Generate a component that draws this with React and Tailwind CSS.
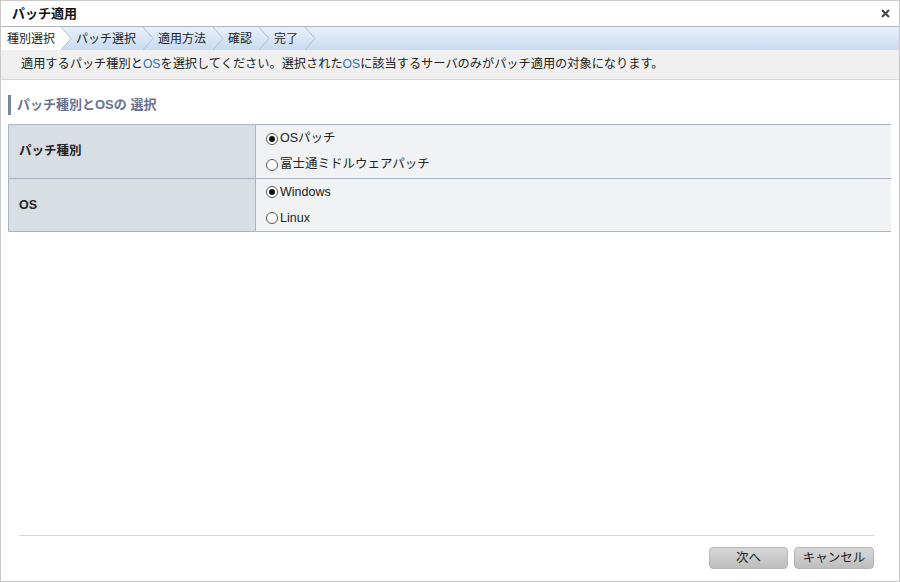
import React from 'react';

const FONT = { fontFamily: '"Liberation Sans", "Noto Sans CJK JP", sans-serif' };

const steps = ['種別選択', 'パッチ選択', '適用方法', '確認', '完了'];

const Chevron = ({ active }) => (
  <svg width="12" height="23" viewBox="0 0 12 23" className="shrink-0">
    {active && <polygon points="0,0 1,0 11,11.5 1,23 0,23" fill="#ffffff" />}
    <polyline points="1,0 11,11.5 1,23" fill="none" stroke="#b4bfcc" strokeWidth="1" />
  </svg>
);

const Radio = ({ checked, label }) => (
  <label className="flex items-center gap-[2px] h-[26px] text-[12.5px] text-[#222]">
    <span className="w-[12px] h-[12px] rounded-full border border-[#555] bg-white flex items-center justify-center">
      {checked && <span className="w-[6px] h-[6px] rounded-full bg-[#111]" />}
    </span>
    <span>{label}</span>
  </label>
);

export default function App() {
  return (
    <div style={FONT} className="w-[900px] h-[582px] bg-white border border-[#c8c8c8] flex flex-col overflow-hidden">
      {/* Title */}
      <div className="h-[26px] flex items-center justify-between pl-[11px] pr-[9px] border-b border-[#a9b3c1]">
        <span className="text-[13px] font-bold text-[#111]">パッチ適用</span>
        <svg width="9" height="9" viewBox="0 0 9 9">
          <path d="M1 1 L8 8 M8 1 L1 8" stroke="#444" strokeWidth="2" />
        </svg>
      </div>

      {/* Steps */}
      <div className="h-[23px] flex items-stretch bg-gradient-to-b from-[#e8f0fa] to-[#c8dbf2]">
        {steps.map((s, i) => (
          <div key={s} className="flex items-stretch">
            <span className={`flex items-center text-[12px] text-[#222] ${i === 0 ? 'bg-white pl-[6px] pr-[5px]' : 'pl-[4px] pr-[6px]'}`}>
              {s}
            </span>
            <Chevron active={i === 0} />
          </div>
        ))}
      </div>

      {/* Instruction */}
      <div className="h-[30px] flex items-center px-[20px] bg-[#f0f0f0] border-b border-[#d4d8dc] text-[12.2px] text-[#222]">
        適用するパッチ種別と<span className="text-[#2c6fc4]">OS</span>を選択してください。選択された<span className="text-[#2c6fc4]">OS</span>に該当するサーバのみがパッチ適用の対象になります。
      </div>

      {/* Body */}
      <div className="flex-1 pl-[7px] pr-[8px] pt-[15px]">
        <div className="flex items-center h-[20px] border-l-[3px] border-[#7c84a0] pl-[6px] text-[13px] font-bold text-[#6a7290]">
          パッチ種別とOSの 選択
        </div>

        <table className="mt-[9px] w-full border-collapse text-[12.5px]">
          <tbody>
            <tr>
              <th className="w-[247px] h-[54px] bg-[#d9dee4] border border-[#aab3c4] text-left pl-[10px] font-bold text-[#222]">
                パッチ種別
              </th>
              <td className="bg-[#f1f2f3] border-y border-[#aab3c4] pl-[10px]">
                <Radio checked label="OSパッチ" />
                <Radio label="富士通ミドルウェアパッチ" />
              </td>
            </tr>
            <tr>
              <th className="h-[53px] bg-[#d9dee4] border border-[#aab3c4] text-left pl-[10px] font-bold text-[#222]">
                OS
              </th>
              <td className="bg-[#f1f2f3] border-y border-[#aab3c4] pl-[10px]">
                <Radio checked label="Windows" />
                <Radio label="Linux" />
              </td>
            </tr>
          </tbody>
        </table>
      </div>

      {/* Footer */}
      <div className="ml-[18px] mr-[25px] border-t border-[#d3dadb] h-[46px] flex items-center justify-end gap-[6px] pb-[1px]">
        <button className="w-[79px] h-[22px] rounded-[4px] bg-gradient-to-b from-[#d8d8d8] to-[#bdbdbd] border border-[#b5b5b5] text-[12.5px] text-[#222]">
          次へ
        </button>
        <button className="w-[80px] h-[22px] rounded-[4px] bg-gradient-to-b from-[#d8d8d8] to-[#bdbdbd] border border-[#b5b5b5] text-[12.5px] text-[#222]">
          キャンセル
        </button>
      </div>
    </div>
  );
}
